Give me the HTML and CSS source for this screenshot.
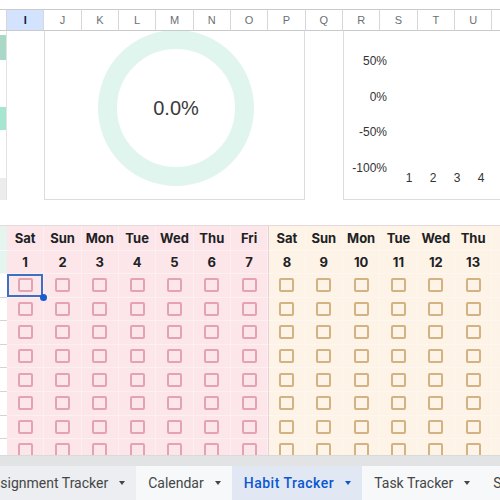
FILE: index.html
```html
<!DOCTYPE html>
<html>
<head>
<meta charset="utf-8">
<link rel="stylesheet" href="styles.css">
</head>
<body>
<div class="sheet">
  <div class="topgap"></div>
  <div class="cols">
    <div></div><div class="act">I</div><div>J</div><div>K</div><div>L</div><div>M</div><div>N</div><div>O</div><div>P</div><div>Q</div><div>R</div><div>S</div><div>T</div><div>U</div><div>V</div>
  </div>
  <div class="charts">
    <div class="strip">
      <div class="s-w1"></div><div class="s-teal"></div><div class="s-w2"></div><div class="s-mint"></div><div class="s-w3"></div><div class="s-gray"></div>
    </div>
    <div class="blank"></div>
    <div class="chart1">
      <svg width="261" height="168" viewBox="0 0 261 168">
        <circle cx="131" cy="77" r="68.5" fill="none" stroke="#dff5ee" stroke-width="19"/>
        <text x="131" y="77" text-anchor="middle" dominant-baseline="central" class="pct">0.0%</text>
      </svg>
    </div>
    <div class="blank"></div>
    <div class="chart2">
      <svg width="200" height="168" viewBox="0 0 200 168">
        <g class="axis" text-anchor="end">
          <text x="43" y="30" dominant-baseline="central">50%</text>
          <text x="43" y="66" dominant-baseline="central">0%</text>
          <text x="43" y="101" dominant-baseline="central">-50%</text>
          <text x="43" y="137" dominant-baseline="central">-100%</text>
        </g>
        <g class="axis" text-anchor="middle">
          <text x="65" y="147" dominant-baseline="central">1</text>
          <text x="89" y="147" dominant-baseline="central">2</text>
          <text x="113" y="147" dominant-baseline="central">3</text>
          <text x="137" y="147" dominant-baseline="central">4</text>
          <text x="161" y="147" dominant-baseline="central">5</text>
        </g>
      </svg>
    </div>
  </div>
  <div class="gap"></div>
  <div class="habits">
    <div class="lh"></div>
    <div class="p h">Sat</div><div class="p h">Sun</div><div class="p h">Mon</div><div class="p h">Tue</div><div class="p h">Wed</div><div class="p h">Thu</div><div class="p h">Fri</div>
    <div class="t h d">Sat</div><div class="t h">Sun</div><div class="t h">Mon</div><div class="t h">Tue</div><div class="t h">Wed</div><div class="t h">Thu</div><div class="t h">Fri</div>

    <div class="lh"></div>
    <div class="p h">1</div><div class="p h">2</div><div class="p h">3</div><div class="p h">4</div><div class="p h">5</div><div class="p h">6</div><div class="p h">7</div>
    <div class="t h d">8</div><div class="t h">9</div><div class="t h">10</div><div class="t h">11</div><div class="t h">12</div><div class="t h">13</div><div class="t h">14</div>

    <div class="lb"></div>
    <div class="p sel"><span class="cb"></span></div><div class="p"><span class="cb"></span></div><div class="p"><span class="cb"></span></div><div class="p"><span class="cb"></span></div><div class="p"><span class="cb"></span></div><div class="p"><span class="cb"></span></div><div class="p"><span class="cb"></span></div>
    <div class="t d"><span class="cb"></span></div><div class="t"><span class="cb"></span></div><div class="t"><span class="cb"></span></div><div class="t"><span class="cb"></span></div><div class="t"><span class="cb"></span></div><div class="t"><span class="cb"></span></div><div class="t"><span class="cb"></span></div>

    <div class="lb"></div>
    <div class="p"><span class="cb"></span></div><div class="p"><span class="cb"></span></div><div class="p"><span class="cb"></span></div><div class="p"><span class="cb"></span></div><div class="p"><span class="cb"></span></div><div class="p"><span class="cb"></span></div><div class="p"><span class="cb"></span></div>
    <div class="t d"><span class="cb"></span></div><div class="t"><span class="cb"></span></div><div class="t"><span class="cb"></span></div><div class="t"><span class="cb"></span></div><div class="t"><span class="cb"></span></div><div class="t"><span class="cb"></span></div><div class="t"><span class="cb"></span></div>

    <div class="lb"></div>
    <div class="p"><span class="cb"></span></div><div class="p"><span class="cb"></span></div><div class="p"><span class="cb"></span></div><div class="p"><span class="cb"></span></div><div class="p"><span class="cb"></span></div><div class="p"><span class="cb"></span></div><div class="p"><span class="cb"></span></div>
    <div class="t d"><span class="cb"></span></div><div class="t"><span class="cb"></span></div><div class="t"><span class="cb"></span></div><div class="t"><span class="cb"></span></div><div class="t"><span class="cb"></span></div><div class="t"><span class="cb"></span></div><div class="t"><span class="cb"></span></div>

    <div class="lb"></div>
    <div class="p"><span class="cb"></span></div><div class="p"><span class="cb"></span></div><div class="p"><span class="cb"></span></div><div class="p"><span class="cb"></span></div><div class="p"><span class="cb"></span></div><div class="p"><span class="cb"></span></div><div class="p"><span class="cb"></span></div>
    <div class="t d"><span class="cb"></span></div><div class="t"><span class="cb"></span></div><div class="t"><span class="cb"></span></div><div class="t"><span class="cb"></span></div><div class="t"><span class="cb"></span></div><div class="t"><span class="cb"></span></div><div class="t"><span class="cb"></span></div>

    <div class="lb"></div>
    <div class="p"><span class="cb"></span></div><div class="p"><span class="cb"></span></div><div class="p"><span class="cb"></span></div><div class="p"><span class="cb"></span></div><div class="p"><span class="cb"></span></div><div class="p"><span class="cb"></span></div><div class="p"><span class="cb"></span></div>
    <div class="t d"><span class="cb"></span></div><div class="t"><span class="cb"></span></div><div class="t"><span class="cb"></span></div><div class="t"><span class="cb"></span></div><div class="t"><span class="cb"></span></div><div class="t"><span class="cb"></span></div><div class="t"><span class="cb"></span></div>

    <div class="lb"></div>
    <div class="p"><span class="cb"></span></div><div class="p"><span class="cb"></span></div><div class="p"><span class="cb"></span></div><div class="p"><span class="cb"></span></div><div class="p"><span class="cb"></span></div><div class="p"><span class="cb"></span></div><div class="p"><span class="cb"></span></div>
    <div class="t d"><span class="cb"></span></div><div class="t"><span class="cb"></span></div><div class="t"><span class="cb"></span></div><div class="t"><span class="cb"></span></div><div class="t"><span class="cb"></span></div><div class="t"><span class="cb"></span></div><div class="t"><span class="cb"></span></div>

    <div class="lb"></div>
    <div class="p"><span class="cb"></span></div><div class="p"><span class="cb"></span></div><div class="p"><span class="cb"></span></div><div class="p"><span class="cb"></span></div><div class="p"><span class="cb"></span></div><div class="p"><span class="cb"></span></div><div class="p"><span class="cb"></span></div>
    <div class="t d"><span class="cb"></span></div><div class="t"><span class="cb"></span></div><div class="t"><span class="cb"></span></div><div class="t"><span class="cb"></span></div><div class="t"><span class="cb"></span></div><div class="t"><span class="cb"></span></div><div class="t"><span class="cb"></span></div>

    <div class="lb"></div>
    <div class="p"><span class="cb"></span></div><div class="p"><span class="cb"></span></div><div class="p"><span class="cb"></span></div><div class="p"><span class="cb"></span></div><div class="p"><span class="cb"></span></div><div class="p"><span class="cb"></span></div><div class="p"><span class="cb"></span></div>
    <div class="t d"><span class="cb"></span></div><div class="t"><span class="cb"></span></div><div class="t"><span class="cb"></span></div><div class="t"><span class="cb"></span></div><div class="t"><span class="cb"></span></div><div class="t"><span class="cb"></span></div><div class="t"><span class="cb"></span></div>
  </div>
  <div class="scroll"></div>
  <div class="tabs">
    <div class="tab first">Assignment Tracker<span class="arr"></span></div>
    <div class="tab">Calendar<span class="arr"></span></div>
    <div class="tab on">Habit Tracker<span class="arr"></span></div>
    <div class="tab">Task Tracker<span class="arr"></span></div>
    <div class="tab">Settings<span class="arr"></span></div>
  </div>
</div>
</body>
</html>
```

FILE: styles.css
```css
* { box-sizing: border-box; }
html, body { margin: 0; padding: 0; }
body {
  width: 500px;
  height: 500px;
  overflow: hidden;
  background: #ffffff;
  font-family: Roboto, "Liberation Sans", Arial, sans-serif;
}
.sheet { display: flex; flex-direction: column; height: 500px; width: 500px; overflow: hidden; }
.topgap { height: 9px; flex: none; }

.cols {
  display: grid;
  grid-template-columns: 7px repeat(14, 37.33px);
  height: 22px;
  flex: none;
}
.cols > div {
  border-top: 1px solid #c9cacc;
  border-bottom: 1px solid #c9cacc;
  border-right: 1px solid #d6d7d9;
  display: flex;
  align-items: center;
  justify-content: center;
  font-family: "Liberation Sans", Arial, sans-serif;
  font-size: 11px;
  color: #6b6f73;
  background: #ffffff;
}
.cols > .act { background: #d3e3fd; color: #0b1d45; font-weight: 700; }

.charts {
  display: grid;
  grid-template-columns: 7px 37px 261px 38px 200px;
  height: 169px;
  flex: none;
}
.strip { display: flex; flex-direction: column; border-right: 1px solid #e3e3e3; }
.s-w1 { height: 4px; }
.s-teal { height: 25px; background: #a9d8c6; }
.s-w2 { height: 47px; }
.s-mint { height: 23px; background: #a6e6d0; }
.s-w3 { height: 48px; }
.s-gray { height: 22px; background: #ececec; }
.blank { background: #ffffff; }
.chart1 {
  border-left: 1px solid #dcdcdc;
  border-right: 1px solid #dcdcdc;
  border-bottom: 1px solid #dcdcdc;
  overflow: hidden;
}
.chart2 {
  border-left: 1px solid #dcdcdc;
  border-bottom: 1px solid #dcdcdc;
  overflow: hidden;
}
.chart1 svg, .chart2 svg { display: block; }
.pct { font-family: "Liberation Sans", Arial, sans-serif; font-size: 20px; fill: #3a3a3a; }
.axis text { font-family: "Liberation Sans", Arial, sans-serif; font-size: 12px; fill: #333333; }

.gap { height: 25px; flex: none; }

.habits {
  display: grid;
  grid-template-columns: 7px repeat(14, 37.33px);
  grid-template-rows: 25px 23px repeat(8, 23.6px);
  height: 230px;
  flex: none;
  overflow: hidden;
  border-top: 1px solid #e6d9db;
}
.lh { background: #e5f4ee; border-bottom: 1px solid #f3faf7; }
.lb { background: #ffffff; border-bottom: 1px solid #d4d4d4; }
.p, .t {
  display: flex;
  align-items: center;
  justify-content: center;
  border-right: 1px solid rgba(255, 255, 255, 0.35);
  border-bottom: 1px solid rgba(255, 255, 255, 0.4);
}
.p { background: #fde6ea; }
.t { background: #fdf3e6; }
.d { border-left: 1px solid #e9cfd3; }
.h {
  font-family: Inter, "Open Sans", sans-serif;
  font-weight: 700;
  font-size: 13px;
  color: #202124;
}
.cb {
  display: block;
  width: 15px;
  height: 14px;
  border-radius: 2px;
  border: 2px solid #e4a3b3;
}
.t .cb { border-color: #d3b284; }
.sel { position: relative; box-shadow: inset 0 0 0 2px #3f6fc2; }
.sel::after {
  content: "";
  position: absolute;
  right: -4px;
  bottom: -4px;
  width: 7px;
  height: 7px;
  border-radius: 50%;
  background: #1a5bd0;
  z-index: 2;
}

.scroll { height: 11px; flex: none; background: #e2e3e5; border-top: 1px solid #d9dadc; }
.tabs {
  height: 34px;
  flex: none;
  display: flex;
  background: #f7f8fa;
  white-space: nowrap;
}
.tab {
  display: flex;
  align-items: center;
  padding: 0 11px 0 12px;
  font-size: 14px;
  color: #444746;
  flex: none;
}
.arr {
  display: block;
  width: 0;
  height: 0;
  border-left: 3.5px solid transparent;
  border-right: 3.5px solid transparent;
  border-top: 4px solid #444746;
  margin-left: 11px;
}
.tab.first { margin-left: -28px; background: #eceef1; }
.tab.on { background: #e1e8f4; color: #0b57d0; font-weight: 500; letter-spacing: 0.5px; }
.tab.on .arr { border-top-color: #0b57d0; }
```
